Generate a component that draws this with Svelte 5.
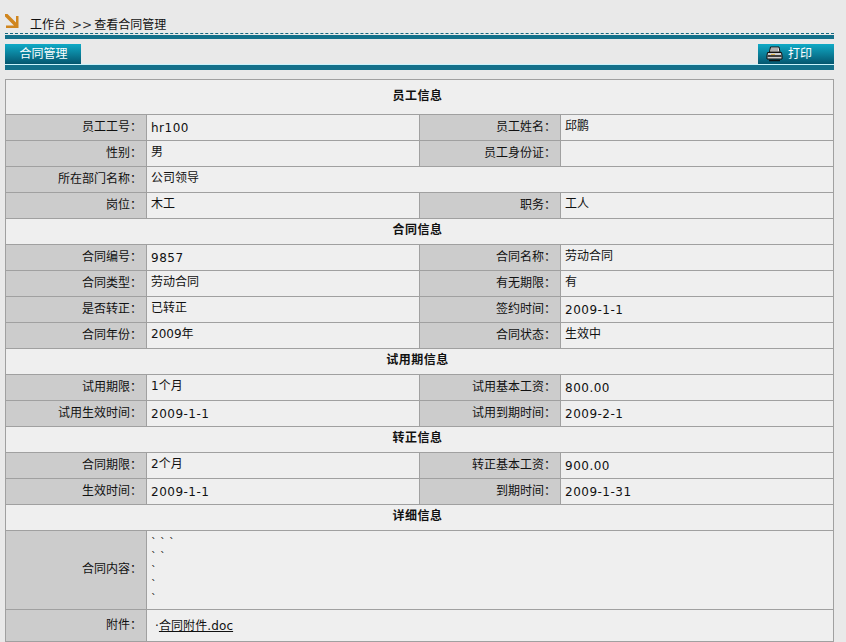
<script>
  const sections = [
    { title: "员工信息", tall: true, rows: [
      ["员工工号：", "hr100", "员工姓名：", "邱鹏"],
      ["性别：", "男", "员工身份证：", ""],
      ["所在部门名称：", "公司领导"],
      ["岗位：", "木工", "职务：", "工人"]
    ]},
    { title: "合同信息", rows: [
      ["合同编号：", "9857", "合同名称：", "劳动合同"],
      ["合同类型：", "劳动合同", "有无期限：", "有"],
      ["是否转正：", "已转正", "签约时间：", "2009-1-1"],
      ["合同年份：", "2009年", "合同状态：", "生效中"]
    ]},
    { title: "试用期信息", rows: [
      ["试用期限：", "1个月", "试用基本工资：", "800.00"],
      ["试用生效时间：", "2009-1-1", "试用到期时间：", "2009-2-1"]
    ]},
    { title: "转正信息", rows: [
      ["合同期限：", "2个月", "转正基本工资：", "900.00"],
      ["生效时间：", "2009-1-1", "到期时间：", "2009-1-31"]
    ]}
  ]
  const content = ["` ` `", "` `", "`", "`", "`"]

  // the latin values run a bit wider than the cjk ones
  const isNum = (v) => /^[\x00-\x7f]+$/.test(v)
</script>

<div class="page">
  <div class="crumb">
    <svg class="arrow" width="14" height="14" viewBox="0 0 14 14">
      <path d="M0 0 H2.5 L11 8.5 V2 H13.5 V14 H1 V11.5 H9 L0 2.5 Z" fill="#d0861f" />
    </svg>
    <span class="crumbtext">工作台</span>
    <span class="sep">&gt;&gt;</span>
    <span>查看合同管理</span>
  </div>
  <div class="rule"></div>

  <div class="tabs">
    <div class="tab">合同管理</div>
    <div class="tab print">
      <svg width="17" height="16" viewBox="0 0 17 16">
        <path d="M4.5 1 H13 L14 6 H3.5 Z" fill="#e8e8e8" stroke="#111" stroke-width="1" />
        <path d="M1.5 6.5 H15.5 L16 9.5 V13 H1 V9.5 Z" fill="#cfcfcf" stroke="#111" stroke-width="1" />
        <path d="M1.5 10 H15.5 M3 14.5 H14" stroke="#111" stroke-width="1.5" />
        <path d="M5 3 H12 M5 5 H12" stroke="#777" stroke-width="1" />
        <path d="M5 8.5 H9" stroke="#d8b04a" stroke-width="1" />
      </svg>
      <span>打印</span>
    </div>
  </div>
  <div class="tabrule"></div>

  <table>
    <colgroup>
      <col class="c1" /><col class="c2" /><col class="c3" /><col />
    </colgroup>
    <tbody>
      {#each sections as s}
        <tr class:tall={s.tall}><th colspan="4">{s.title}</th></tr>
        {#each s.rows as r}
          <tr>
            <td class="label">{r[0]}</td>
            {#if r.length == 2}
              <td colspan="3">{r[1]}</td>
            {:else}
              <td class:num={isNum(r[1])}>{r[1]}</td>
              <td class="label">{r[2]}</td>
              <td class:num={isNum(r[3])}>{r[3]}</td>
            {/if}
          </tr>
        {/each}
      {/each}
      <tr><th colspan="4">详细信息</th></tr>
      <tr class="contentrow">
        <td class="label">合同内容：</td>
        <td colspan="3" class="lines">
          {#each content as line}
            <div class="line">{line}</div>
          {/each}
        </td>
      </tr>
      <tr class="attach">
        <td class="label">附件：</td>
        <td colspan="3" class="num"><span class="dot">·</span><a href="#top">合同附件.doc</a></td>
      </tr>
    </tbody>
  </table>
</div>

<style>
  :global(body) {
    background: #e9e9e9;
    overflow: hidden;
  }
  .page {
    height: 642px;
    overflow: hidden;
    padding: 11px 12px 0 5px;
    box-sizing: border-box;
    font-family: "DejaVu Sans", "Noto Sans CJK SC", sans-serif;
    font-size: 12px;
    color: #111;
  }
  .crumb {
    display: flex;
    align-items: flex-end;
    height: 22px;
    line-height: 16px;
    white-space: nowrap;
  }
  .arrow {
    margin-bottom: 5px;
    margin-right: 11px;
  }
  .crumbtext {
    margin-right: 6px;
  }
  .sep {
    margin-right: 2px;
    color: #333;
  }
  .rule {
    border-top: 1px dashed #12687f;
    padding-top: 1px;
  }
  .rule::after {
    content: "";
    display: block;
    height: 4px;
    background: #14708a;
  }
  .tabs {
    display: flex;
    justify-content: space-between;
    margin-top: 5px;
  }
  .tab {
    height: 20px;
    width: 76px;
    box-sizing: border-box;
    padding-left: 1px;
    background: linear-gradient(#10aac6, #05566f);
    color: #fff;
    text-align: center;
    line-height: 20px;
  }
  .print {
    display: flex;
    align-items: center;
    gap: 5px;
    padding-left: 8px;
    text-align: left;
  }
  .tabrule {
    height: 6px;
    box-sizing: border-box;
    background: #14708a;
    border-top: 1px solid #c8f2fa;
  }
  table {
    width: 829px;
    margin-top: 9px;
    border-collapse: collapse;
    table-layout: fixed;
    background: #efefef;
  }
  .c1 {
    width: 141px;
  }
  .c2 {
    width: 273px;
  }
  .c3 {
    width: 141px;
  }
  th, td {
    border: 1px solid #a0a0a0;
    height: 26px;
    padding: 0 0 3px 4px;
    box-sizing: border-box;
    font-size: 12px;
    font-weight: normal;
    text-align: left;
    line-height: 16px;
    white-space: nowrap;
  }
  th {
    padding: 0 4px 3px 0;
    text-align: center;
    font-weight: bold;
    letter-spacing: 0.5px;
  }
  .tall th {
    height: 35px;
  }
  td.label {
    background: #cccccc;
    text-align: right;
    padding: 0 4px 2px 0;
  }
  td.num {
    padding-bottom: 0;
    letter-spacing: 0.5px;
  }
  .contentrow td {
    height: 79px;
  }
  td.lines {
    padding: 1px 0 0 4px;
  }
  .line {
    height: 14px;
    line-height: 14px;
    font-size: 11px;
  }
  .attach td {
    height: 32px;
  }
  .attach td.num {
    letter-spacing: 0.1px;
  }
  .dot {
    margin-left: 4px;
  }
  a {
    color: #111;
  }
</style>
